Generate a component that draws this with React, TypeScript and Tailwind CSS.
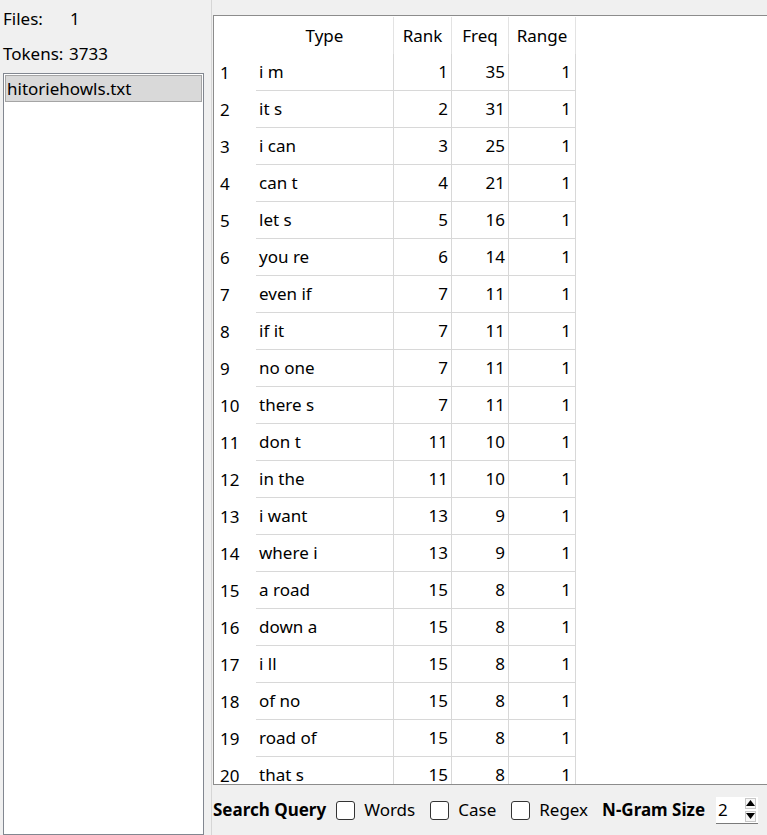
import React from "react";

// 表格数据：Type / Rank / Freq / Range
const ROWS: [string, number, number, number][] = [
  ["i m", 1, 35, 1],
  ["it s", 2, 31, 1],
  ["i can", 3, 25, 1],
  ["can t", 4, 21, 1],
  ["let s", 5, 16, 1],
  ["you re", 6, 14, 1],
  ["even if", 7, 11, 1],
  ["if it", 7, 11, 1],
  ["no one", 7, 11, 1],
  ["there s", 7, 11, 1],
  ["don t", 11, 10, 1],
  ["in the", 11, 10, 1],
  ["i want", 13, 9, 1],
  ["where i", 13, 9, 1],
  ["a road", 15, 8, 1],
  ["down a", 15, 8, 1],
  ["i ll", 15, 8, 1],
  ["of no", 15, 8, 1],
  ["road of", 15, 8, 1],
  ["that s", 15, 8, 1],
];

function CheckBox({ label }: { label: string }) {
  return (
    <label className="flex items-center gap-[9px]">
      <span className="w-[19px] h-[19px] rounded-[3px] border border-[#333] bg-white" />
      <span>{label}</span>
    </label>
  );
}

function SpinBox() {
  return (
    <div className="flex items-center w-[42px] h-[27px] bg-white border-b border-[#7a7a7a] ml-[11px]">
      <span className="pl-[2px] flex-1">2</span>
      <div className="flex flex-col gap-[2px] pr-[2px]">
        <span className="w-[11px] h-[11px] border border-[#c8c8c8] bg-[#f7f7f7] flex items-center justify-center">
          <svg width="9" height="6" viewBox="0 0 9 6"><path d="M4.5 0L9 6H0z" fill="#000" /></svg>
        </span>
        <span className="w-[11px] h-[11px] border border-[#c8c8c8] bg-[#f7f7f7] flex items-center justify-center">
          <svg width="9" height="6" viewBox="0 0 9 6"><path d="M0 0H9L4.5 6z" fill="#000" /></svg>
        </span>
      </div>
    </div>
  );
}

export default function App() {
  return (
    <div
      className="w-[767px] h-[835px] flex bg-[#f0f0f0] text-black text-[17px] overflow-hidden"
      style={{ fontFamily: '"Noto Sans", "Liberation Sans", sans-serif' }}
    >
      {/* 左侧：文件信息 + 文件列表 */}
      <div className="w-[211px] flex flex-col shrink-0">
        <div className="flex h-[37px] items-center pl-[3px]">
          <span className="w-[67px]">Files:</span>
          <span>1</span>
        </div>
        <div className="flex h-[33px] items-center pl-[3px]">
          <span className="w-[66px]">Tokens:</span>
          <span>3733</span>
        </div>
        <div className="ml-[3px] mt-[3px] w-[201px] flex-1 bg-white border border-[#828790] p-[1px]">
          <div className="h-[27px] bg-[#d9d9d9] border border-[#a5a5a5] flex items-center pl-[1px]">
            hitoriehowls.txt
          </div>
        </div>
      </div>

      {/* 右侧：表格 + 底部工具栏 */}
      <div className="flex-1 flex flex-col border-l border-[#d6d6d6] min-w-0">
        <div className="mt-[15px] ml-[1px] h-[770px] bg-white border-t border-l border-b border-[#8c8c8c] overflow-hidden">
          <div className="flex h-[38px] pt-[1px]">
            <div className="w-[42px]" />
            <div className="w-[138px] border-r border-[#e3e3e3] flex items-center justify-center">Type</div>
            <div className="w-[58px] border-r border-[#e3e3e3] flex items-center justify-center">Rank</div>
            <div className="w-[57px] border-r border-[#e3e3e3] flex items-center justify-center">Freq</div>
            <div className="w-[67px] border-r border-[#e3e3e3] flex items-center justify-center">Range</div>
          </div>
          {ROWS.map(([type, rank, freq, range], i) => (
            <div key={i} className="flex h-[37px]">
              <div className="w-[42px] flex items-center pl-[6px]">{i + 1}</div>
              <div className="w-[138px] border-r border-b border-[#d8d8d8] flex items-center pl-[3px]">{type}</div>
              <div className="w-[58px] border-r border-b border-[#d8d8d8] flex items-center justify-end pr-[3px]">{rank}</div>
              <div className="w-[57px] border-r border-b border-[#d8d8d8] flex items-center justify-end pr-[3px]">{freq}</div>
              <div className="w-[67px] border-r border-b border-[#d8d8d8] flex items-center justify-end pr-[4px]">{range}</div>
            </div>
          ))}
        </div>
        <div className="flex-1 flex items-center pl-[1px] text-[#000]">
          <span className="font-bold mr-[10px]">Search Query</span>
          <div className="flex items-center gap-[15px]">
            <CheckBox label="Words" />
            <CheckBox label="Case" />
            <CheckBox label="Regex" />
          </div>
          <span className="font-bold ml-[14px]">N-Gram Size</span>
          <SpinBox />
        </div>
      </div>
    </div>
  );
}
